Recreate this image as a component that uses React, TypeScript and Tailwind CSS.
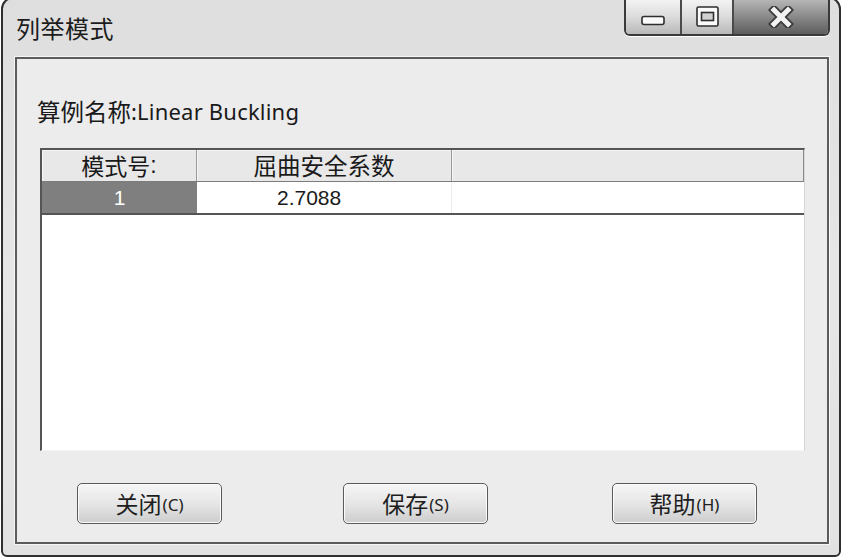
import React from "react";

const cjk = { fontFamily: "'Noto Sans CJK SC', 'Noto Sans', sans-serif" };
const latin = { fontFamily: "'Noto Sans', 'Noto Sans CJK SC', sans-serif" };
const arial = { fontFamily: "'Liberation Sans', 'Noto Sans CJK SC', sans-serif" };

const CaptionButtons: React.FC = () => (
  <div className="flex h-[37px] rounded-b-[6px] border-x-2 border-b-2 border-[#3a3a3a] overflow-hidden shadow-[0_1px_0_#ffffff]">
    <div className="w-[56px] flex items-center justify-center pt-[8px] bg-gradient-to-b from-[#f4f4f4] via-[#dcdcdc] to-[#b8b8b8] border-r-2 border-[#4a4a4a]">
      <svg width="24" height="11" viewBox="0 0 24 11">
        <rect x="1" y="1.5" width="22" height="8" rx="2" fill="#fafafa" stroke="#2e2e2e" strokeWidth="1.6" />
      </svg>
    </div>
    <div className="w-[52px] flex items-center justify-center bg-gradient-to-b from-[#f4f4f4] via-[#dcdcdc] to-[#b8b8b8] border-r-2 border-[#4a4a4a]">
      <svg width="23" height="21" viewBox="0 0 23 21">
        <rect x="1" y="1" width="21" height="19" rx="1.5" fill="#fafafa" stroke="#2e2e2e" strokeWidth="1.6" />
        <rect x="5.5" y="6.5" width="12" height="8" fill="#d0d0d0" stroke="#2e2e2e" strokeWidth="1.6" />
      </svg>
    </div>
    <div className="flex-1 flex items-center justify-center bg-gradient-to-b from-[#b8b8b8] via-[#8a8a8a] to-[#5e5e5e]">
      <svg width="26" height="22" viewBox="0 0 26 22">
        <path d="M6 4 L20 18 M20 4 L6 18" stroke="#3a3a3a" strokeWidth="8.5" strokeLinecap="square" />
        <path d="M6 4 L20 18 M20 4 L6 18" stroke="#f2f2f2" strokeWidth="5" strokeLinecap="square" />
      </svg>
    </div>
  </div>
);

const Button: React.FC<{ label: string; key2: string; className?: string }> = ({ label, key2, className }) => (
  <div
    className={
      "w-[145px] h-[41px] rounded-[5px] border border-[#5a5a5a] bg-gradient-to-b from-[#f6f6f6] via-[#e6e6e6] to-[#cdcdcd] shadow-[inset_0_0_0_1px_#fbfbfb] flex items-center justify-center text-[#1e1e1e] " +
      (className ?? "")
    }
  >
    <span style={cjk} className="text-[23px] leading-none">{label}</span>
    <span style={latin} className="text-[17px] leading-none ml-[1px] pt-[2px]">({key2})</span>
  </div>
);

export default function App() {
  return (
    <div className="w-[843px] h-[559px] bg-white overflow-hidden">
      <div className="ml-[1px] mt-[-3px] w-[840px] h-[560px] rounded-t-[12px] rounded-b-[6px] border-2 border-[#2f2f2f] bg-gradient-to-b from-[#dedede] via-[#e6e6e6] to-[#e2e2e2] flex flex-col">
        {/* title bar */}
        <div className="h-[58px] flex items-start pl-[13px] pr-[9px]">
          <div style={cjk} className="pt-[14px] text-[24px] leading-[30px] text-[#1c1c1c] tracking-[0.5px]">
            列举模式
          </div>
          <div className="ml-auto w-[206px]">
            <CaptionButtons />
          </div>
        </div>

        {/* client frame */}
        <div className="ml-[12px] mr-[10px] h-[487px] border-2 border-[#5c5c5c] bg-[#ececec] shadow-[0_0_0_1px_#f6f6f6] flex flex-col">
          <div className="pl-[20px] pt-[36px] h-[89px] flex items-start text-[#1a1a1a]">
            <span style={cjk} className="text-[23.5px] leading-[32px]">算例名称</span>
            <span style={latin} className="text-[22px] leading-[32px] tracking-[0.2px]">:Linear Buckling</span>
          </div>

          {/* list */}
          <div className="ml-[23px] w-[765px] h-[303px] border-t-2 border-l-2 border-[#555] border-r border-b border-r-[#d6d6d6] border-b-[#f4f4f4] bg-white flex flex-col">
            <div className="h-[32px] flex bg-[#e8e8e8] border-b border-[#7c7c7c] text-[#1a1a1a]">
              <div style={cjk} className="w-[155px] border-r border-[#9a9a9a] shadow-[inset_1px_1px_0_#f6f6f6] flex items-center justify-center text-[23px] leading-none">
                模式号<span style={arial}>:</span>
              </div>
              <div style={cjk} className="w-[255px] border-r border-[#9a9a9a] shadow-[inset_1px_1px_0_#f6f6f6] flex items-center justify-center text-[23.5px] leading-none">
                屈曲安全系数
              </div>
              <div className="flex-1 border-r border-[#8a8a8a] shadow-[inset_1px_1px_0_#f6f6f6]" />
            </div>
            <div className="h-[33px] flex border-b-2 border-[#555]" style={arial}>
              <div className="w-[155px] bg-[#7f7f7f] text-white flex items-center justify-center text-[21px] leading-none">
                1
              </div>
              <div className="w-[255px] border-r border-[#ececec] flex items-center pl-[80px] text-[21px] leading-none text-[#1a1a1a]">
                2.7088
              </div>
              <div className="flex-1" />
            </div>
            <div className="flex-1" />
          </div>

          {/* buttons */}
          <div className="mt-[32px] flex pl-[60px]">
            <Button label="关闭" key2="C" />
            <Button label="保存" key2="S" className="ml-[121px]" />
            <Button label="帮助" key2="H" className="ml-[124px]" />
          </div>
        </div>
      </div>
    </div>
  );
}
